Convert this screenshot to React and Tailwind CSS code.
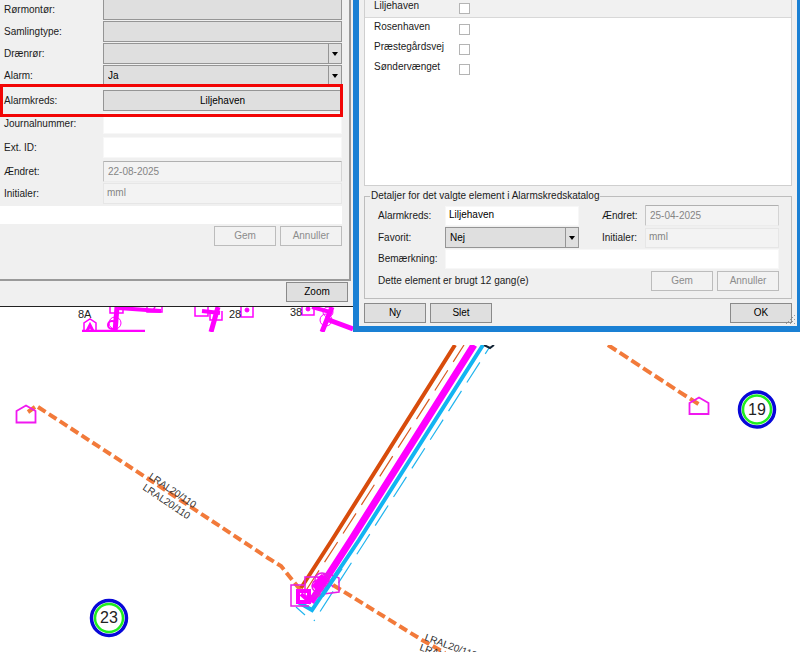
import React from "react";

const buttonOn = "border border-[#8a8a8a] bg-[#dfdfdf] text-black";
const buttonOff = "border border-[#bcbcbc] bg-[#f2f2f2] text-[#8c8c8c]";

function Button({ disabled = false, children }) {
  return (
    <button
      type="button"
      disabled={disabled}
      className={`h-5 w-[62px] text-center ${disabled ? buttonOff : buttonOn}`}
    >
      {children}
    </button>
  );
}

function Combo({ id, value, options }) {
  return (
    <div className="relative h-full w-full">
      <select
        id={id}
        defaultValue={value}
        className="block h-full w-full appearance-none border border-[#959595] bg-[#dfdfdf] pl-1 text-black outline-none"
      >
        {options.map((o) => (
          <option key={o} value={o}>{o}</option>
        ))}
      </select>
      <span className="pointer-events-none absolute inset-y-0 right-0 flex w-3.5 items-center justify-center border border-[#959595]">
        <svg width="6" height="4" viewBox="0 0 6 4" aria-hidden="true">
          <path d="M0 0H6L3 4Z" fill="#000" />
        </svg>
      </span>
    </div>
  );
}

function TextField({ id, value = "", readOnly = false }) {
  return (
    <input
      id={id}
      type="text"
      defaultValue={value}
      readOnly={readOnly}
      className={
        readOnly
          ? "block h-full w-full border border-[#e6e6e6] bg-[#f3f3f3] px-[3px] pb-[3px] text-[#858585] outline-none"
          : "block h-full w-full border border-[#f7f7f7] bg-white px-[3px] pb-[3px] text-black outline-none"
      }
    />
  );
}

function DateField({ id, value }) {
  return (
    <input
      id={id}
      type="text"
      defaultValue={value}
      readOnly
      className="block h-full w-full rounded-[1px] border border-b-[#ececec] border-l-[#c4c4c4] border-r-[#d4d4d4] border-t-[#b0b0b0] bg-[#f3f3f3] px-1 text-[#858585] outline-none"
    />
  );
}

function Row({ id, label, className = "", children }) {
  return (
    <div className={`flex h-[21px] items-center ${className}`}>
      <label htmlFor={id} className="w-[103px] shrink-0 pl-1">{label}</label>
      <div className="h-full min-w-0 flex-1">{children}</div>
    </div>
  );
}

function ComponentWindow() {
  const flat = "block h-full w-full border border-[#959595] bg-[#dfdfdf] text-center text-black";
  return (
    <section className="overflow-hidden border-b border-[#222] bg-[#f0f0f0]">
      <div className="mr-0.5 border-b-2 border-r-2 border-[#9a9a9a] pb-[33px] pr-[7px]">
        <Row id="fitter" label="Rørmontør:" className="-mt-px">
          <button id="fitter" type="button" className={flat} />
        </Row>
        <Row id="joint" label="Samlingtype:" className="mt-px">
          <button id="joint" type="button" className={flat} />
        </Row>
        <Row id="drain" label="Drænrør:" className="mt-px">
          <Combo id="drain" value="" options={["", "Ja", "Nej"]} />
        </Row>
        <Row id="alarm" label="Alarm:" className="mt-px">
          <Combo id="alarm" value="Ja" options={["Ja", "Nej"]} />
        </Row>
        <Row id="circuit" label="Alarmkreds:" className="relative mt-1">
          <button id="circuit" type="button" className={flat}>Liljehaven</button>
          <span className="pointer-events-none absolute -inset-y-1.5 -right-px left-0 border-[3px] border-[#f20505]" />
        </Row>
        <Row id="journal" label="Journalnummer:" className="mt-0.5">
          <TextField id="journal" />
        </Row>
        <Row id="ext" label="Ext. ID:" className="mt-[3px]">
          <TextField id="ext" />
        </Row>
        <Row id="changed" label="Ændret:" className="mt-[3px]">
          <DateField id="changed" value="22-08-2025" />
        </Row>
        <Row id="initials" label="Initialer:" className="mt-px">
          <TextField id="initials" value="mml" readOnly />
        </Row>
        <input aria-label="Note" type="text" className="mt-0.5 block h-[18px] w-full bg-white px-1 outline-none" />
        <div className="mt-0.5 flex justify-end gap-1">
          <Button disabled>Gem</Button>
          <Button disabled>Annuller</Button>
        </div>
      </div>
      <div className="flex justify-end py-px pb-1 pr-[5px]">
        <Button>Zoom</Button>
      </div>
    </section>
  );
}

function MapStrip() {
  return (
    <svg viewBox="0 307 353 25" className="block w-full" fontSize="11" fill="none" stroke="#ff00ff" aria-label="Map">
      <path d="M117 307L115 332" strokeWidth="5" />
      <path d="M118 308L161 311" strokeWidth="4" />
      <path d="M82 331H145" strokeWidth="2.5" />
      <path d="M218 307L211 332" strokeWidth="5" />
      <path d="M202 311L220 313M312 307L330 312" strokeWidth="4" />
      <path d="M332 307L322 332M329 320L353 329" strokeWidth="5" />
      <path d="M84 331V323L90 319L96 323V331M110 307V313H123V307M147 307V312H162V307M155 307L152 312" strokeWidth="1.5" />
      <path d="M195 307V316H208V307M210 311V320H222V311M241 307V317H253V307M302 307V315H314V307" strokeWidth="1.5" />
      <circle cx="115" cy="323" r="6" strokeWidth="1" />
      <circle cx="112" cy="325" r="4" strokeWidth="2" />
      <circle cx="328" cy="312" r="5" strokeWidth="1" />
      <circle cx="326" cy="320" r="6" strokeWidth="1" />
      <path d="M87 331L90 325L93 331" strokeWidth="3" />
      <circle cx="247" cy="310" r="2" fill="#ff00ff" />
      <circle cx="308" cy="309" r="2" fill="#ff00ff" />
      <g fill="#222" stroke="none">
        <text x="78" y="318">8A</text>
        <text x="229" y="318">28</text>
        <text x="290" y="316">38</text>
      </g>
    </svg>
  );
}

const catalog = ["Liljehaven", "Rosenhaven", "Præstegårdsvej", "Søndervænget"];

function CatalogWindow() {
  return (
    <section className="flex min-w-0 flex-1 flex-col border-b-[6px] border-l-[6px] border-r-[3px] border-[#1a80d4] bg-[#f0f0f0] pb-[3px] pl-[5px] pr-[5px]">
      <ul className="h-[186px] border border-t-0 border-[#cfcfcf] bg-white">
        {catalog.map((name, i) => (
          <li
            key={name}
            className={
              i === 0
                ? "flex h-[18px] items-start border-b border-[#d8d8d8] bg-[#f1f1f1] pl-[9px]"
                : "flex h-5 items-start pl-[9px] pt-[3px]"
            }
          >
            <label htmlFor={`item-${i}`} className="w-[85px]">{name}</label>
            <input
              id={`item-${i}`}
              type="checkbox"
              className="mt-[3px] size-[11px] appearance-none border border-[#b4b4b4] bg-white"
            />
          </li>
        ))}
      </ul>
      <fieldset className="mt-1 min-w-0 border border-[#bdbdbd] pb-[7px] pl-[13px] pr-3 pt-[3px]">
        <legend className="-ml-2 px-px">Detaljer for det valgte element i Alarmskredskatalog</legend>
        <div className="grid grid-cols-[67px_134px_23px_43px_1fr] items-center gap-y-px">
          <label htmlFor="c-name">Alarmkreds:</label>
          <div className="h-5"><TextField id="c-name" value="Liljehaven" /></div>
          <span />
          <label htmlFor="c-date">Ændret:</label>
          <div className="h-[21px]"><DateField id="c-date" value="25-04-2025" /></div>
          <label htmlFor="c-fav">Favorit:</label>
          <div className="h-[21px]"><Combo id="c-fav" value="Nej" options={["Ja", "Nej"]} /></div>
          <span />
          <label htmlFor="c-init">Initialer:</label>
          <div className="h-5"><TextField id="c-init" value="mml" readOnly /></div>
          <label htmlFor="c-note">Bemærkning:</label>
          <div className="col-span-4 h-5"><TextField id="c-note" /></div>
        </div>
        <div className="mt-0.5 flex items-center gap-1">
          <p className="flex-1">Dette element er brugt 12 gang(e)</p>
          <Button disabled>Gem</Button>
          <Button disabled>Annuller</Button>
        </div>
      </fieldset>
      <div className="relative mt-auto flex gap-1">
        <Button>Ny</Button>
        <Button>Slet</Button>
        <span className="flex-1" />
        <Button>OK</Button>
        <svg className="absolute -bottom-0.5 -right-1" width="10" height="10" viewBox="0 0 10 10" fill="#9a9a9a" aria-hidden="true">
          <path d="M8 0h1v1h-1zM4 4h1v1h-1zM8 4h1v1h-1zM0 8h1v1h-1zM4 8h1v1h-1zM8 8h1v1h-1zM6 2h1v1h-1zM2 6h1v1h-1zM6 6h1v1h-1z" />
        </svg>
      </div>
    </section>
  );
}

function PipeLabel({ x, y, angle }) {
  return (
    <text x={x} y={y} transform={`rotate(${angle} ${x} ${y})`} fontSize="10" fill="#333">LRAL20/110</text>
  );
}

function Badge({ cx, cy, label }) {
  return (
    <g fill="none">
      <circle cx={cx} cy={cy} r="17.5" stroke="#0808d8" strokeWidth="3.5" />
      <circle cx={cx} cy={cy} r="14" stroke="#20ee20" strokeWidth="2.5" />
      <text x={cx} y={cy + 5} textAnchor="middle" fontSize="16" fill="#222">{label}</text>
    </g>
  );
}

function PipeMap() {
  return (
    <svg viewBox="0 345 800 307" className="mt-[13px] block w-full" fill="none" aria-label="Pipe map">
      <g stroke="#f27a3a" strokeWidth="4">
        <path d="M28 412L35 407" />
        <path d="M38 407L150 480L268 558L281 566L302 592" strokeDasharray="9 4" />
        <path d="M333 585L422 640L445 653" strokeDasharray="9 4" />
        <path d="M608 345L678 391L700 405" strokeDasharray="10 4" />
      </g>
      <PipeLabel x={148} y={478} angle={34} />
      <PipeLabel x={142} y={489} angle={34} />
      <PipeLabel x={424} y={640} angle={20} />
      <PipeLabel x={419} y={650} angle={20} />
      <path d="M464 345L337 543L305 592" stroke="#d85a20" strokeWidth="1.2" strokeDasharray="24 10" strokeDashoffset="4" />
      <path d="M489 348L366 540L314 621" stroke="#20b4ee" strokeWidth="1.2" strokeDasharray="24 10" strokeDashoffset="17" />
      <path d="M296 607L305 615" stroke="#20b4ee" strokeWidth="1.2" />
      <path d="M455 345L332 540L301 588" stroke="#d84c0c" strokeWidth="4" />
      <path d="M474 345L351 540L311 602" stroke="#ff00ff" strokeWidth="7" />
      <path d="M483 345L359 540L312 610L298 602" stroke="#12b4f2" strokeWidth="4" />
      <path d="M484 345L490 348L494 345" stroke="#123" strokeWidth="2" />
      <g stroke="#f018f0" strokeWidth="1.8">
        <path d="M16.500 411L26 405.500L35.500 411V422.500H16.500Z" />
        <path d="M689.500 403L699 397.500L708.500 403V414H689.500Z" />
      </g>
      <g stroke="#e81ce8" strokeWidth="1.5">
        <path d="M305 585H291V606H309M305 577H319V596H305ZM317 578L327 573L339 578V592L315 595M313 582L326 577L333 587" />
        <circle cx="322" cy="580" r="7" />
        <circle cx="318" cy="586" r="6" />
      </g>
      <path d="M298 591H309V602H298ZM301 594L311 603" stroke="#ff00ff" strokeWidth="4" />
      <path d="M315 589L325 577" stroke="#ff00ff" strokeWidth="9" />
      <path d="M341 568L322 596" stroke="#12b4f2" strokeWidth="4" />
      <Badge cx={109} cy={618} label="23" />
      <Badge cx={757} cy={409.5} label="19" />
    </svg>
  );
}

export default function App() {
  return (
    <main className="overflow-hidden bg-white font-['Liberation_Sans',Arial,sans-serif] text-[10px] leading-3 text-[#1a1a1a]">
      <div className="flex">
        <div className="w-[353px] shrink-0">
          <ComponentWindow />
          <MapStrip />
        </div>
        <CatalogWindow />
      </div>
      <PipeMap />
    </main>
  );
}
